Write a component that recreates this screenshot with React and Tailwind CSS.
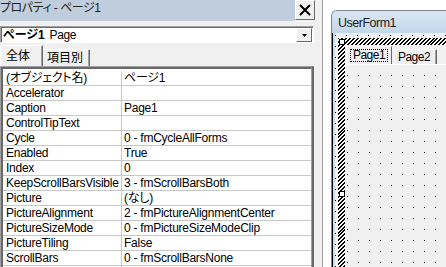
import React from 'react'

const rows = [
  ['(オブジェクト名)', 'ページ1'],
  ['Accelerator', ''],
  ['Caption', 'Page1'],
  ['ControlTipText', ''],
  ['Cycle', '0 - fmCycleAllForms'],
  ['Enabled', 'True'],
  ['Index', '0'],
  ['KeepScrollBarsVisible', '3 - fmScrollBarsBoth'],
  ['Picture', '(なし)'],
  ['PictureAlignment', '2 - fmPictureAlignmentCenter'],
  ['PictureSizeMode', '0 - fmPictureSizeModeClip'],
  ['PictureTiling', 'False'],
  ['ScrollBars', '0 - fmScrollBarsNone'],
  ['', ''],
]

function PropertiesPanel() {
  return (
    <div className="flex w-[323px] shrink-0 flex-col border-r border-[#a0a0a0] bg-[#f0f0f0]">
      {/* title */}
      <div className="flex h-[21px] shrink-0">
        <div className="flex flex-1 items-start overflow-hidden bg-[#bfcddc] pt-[1px]">
          <span className="whitespace-nowrap text-[12px] leading-[14px] tracking-[-0.5px] text-[#222] [font-feature-settings:'palt']">
            プロパティ - ページ1
          </span>
        </div>
        <div className="flex h-[20px] w-[20px] items-center justify-center border border-white border-r-[#696969] border-b-[#696969] bg-[#f0f0f0]">
          <svg width="12" height="12" viewBox="0 0 12 12">
            <path d="M1 1L11 11M11 1L1 11" stroke="#000" strokeWidth="2" />
          </svg>
        </div>
        <div className="w-[7px]" />
      </div>

      {/* object combo */}
      <div className="mt-[5px] h-[17px] w-[314px] border border-[#a0a0a0] border-r-white border-b-white">
        <div className="flex h-full items-center border-l border-t border-[#696969] bg-white pl-[1px]">
          <span className="text-[12px] font-bold leading-[14px] [font-feature-settings:'palt']">ページ1</span>
          <span className="ml-[5px] text-[12px] leading-[14px] tracking-[-0.4px]">Page</span>
          <div className="ml-auto mr-[1px] flex h-[14px] w-[16px] items-center justify-center border border-white border-r-[#696969] border-b-[#696969] bg-[#f0f0f0]">
            <svg width="5" height="3" viewBox="0 0 5 3">
              <path d="M0 0H5L2.5 3Z" fill="#000" />
            </svg>
          </div>
        </div>
      </div>

      {/* tabs */}
      <div className="mt-[2px] flex h-[21px] items-end">
        <div className="flex h-[21px] w-[43px] items-center border-l border-t border-white border-r border-r-[#696969] pl-[5px] text-[12px] leading-[14px] shadow-[inset_-1px_0_#a0a0a0]">
          全体
        </div>
        <div className="flex h-[17px] w-[47px] items-center border-t border-white border-r border-r-[#696969] pl-[4px] text-[12px] leading-[14px] shadow-[inset_-1px_0_#a0a0a0]">
          項目別
        </div>
      </div>

      {/* grid */}
      <div className="w-[314px] flex-1 border-l border-t border-[#a0a0a0] border-r-2 border-r-[#696969]">
        <div className="h-full border-l-2 border-t-2 border-[#696969] border-r border-r-[#a0a0a0] bg-white">
          <div className="h-[2px]" />
          {rows.map(([name, value], i) => (
            <div key={i} className="flex h-[15px] border-b border-[#c8c8c8] text-[12px] leading-[14px] tracking-[-0.25px]">
              <div className="w-[119px] shrink-0 overflow-hidden whitespace-nowrap border-r border-[#c8c8c8] pl-[3px] [font-feature-settings:'palt']">
                {name}
              </div>
              <div className="flex-1 overflow-hidden whitespace-nowrap pl-[2px] [font-feature-settings:'palt']">
                {value}
              </div>
            </div>
          ))}
        </div>
      </div>
    </div>
  )
}

function FormDesigner() {
  return (
    <div className="flex-1 overflow-hidden bg-white pl-[8px] pt-[10px]">
      <div className="h-[300px] w-[140px] overflow-hidden rounded-tl-[6px] border-l border-t border-[#7a8899] bg-[#cddcec]">
        <div className="flex h-[22px] items-center bg-[linear-gradient(#d9e6f3,#c4d6ea)] pl-[6px] pt-[2px] text-[12.5px] leading-[14px] tracking-[-0.5px] text-[#1a1a1a]">
          UserForm1
        </div>
        <div className="h-full border-l border-black">
          <div className="h-full border-l-2 border-[#cddcec]">
            <div className="h-full bg-[#f0f0f0] bg-[radial-gradient(circle_at_0.5px_0.5px,#000_0.5px,transparent_0.5px)] bg-[length:11px_11px] bg-[position:0px_2px] pl-[3px] pt-[5px]">
              {/* selected multipage with hatched frame */}
              <div className="relative h-[260px] bg-[repeating-linear-gradient(135deg,#000_0px,#000_1.4px,#fff_1.4px,#fff_2.8px)] pl-[7px] pt-[7px]">
                <div className="absolute left-[1px] top-[1px] h-[6px] w-[6px] border border-black bg-white" />
                <div className="absolute left-[1px] top-[153px] h-[6px] w-[6px] border border-black bg-white" />
                <div className="flex h-full flex-col bg-[#f0f0f0]">
                  <div className="flex h-[19px] shrink-0 items-end pl-[1px]">
                    <div className="flex h-[18px] w-[46px] items-center justify-center border-l border-t border-white border-r border-r-[#696969]">
                      <span className="border border-dotted border-black px-[2px] text-[12px] leading-[11px] tracking-[-0.5px]">
                        Page1
                      </span>
                    </div>
                    <div className="flex h-[15px] w-[45px] items-center justify-center border-t border-white border-r border-r-[#696969] pt-[1px] text-[12px] leading-[13px] tracking-[-0.5px] shadow-[inset_-1px_0_#a0a0a0]">
                      Page2
                    </div>
                  </div>
                  <div className="flex-1 border-t border-white bg-[#f0f0f0] bg-[radial-gradient(circle_at_0.5px_0.5px,#000_0.5px,transparent_0.5px)] bg-[length:11px_11px] bg-[position:2px_-1px]" />
                </div>
              </div>
            </div>
          </div>
        </div>
      </div>
    </div>
  )
}

export default function App() {
  return (
    <div className="flex h-[267px] w-[446px] overflow-hidden bg-white font-['Liberation_Sans','Noto_Sans_CJK_JP',sans-serif] text-black">
      <PropertiesPanel />
      <FormDesigner />
    </div>
  )
}
